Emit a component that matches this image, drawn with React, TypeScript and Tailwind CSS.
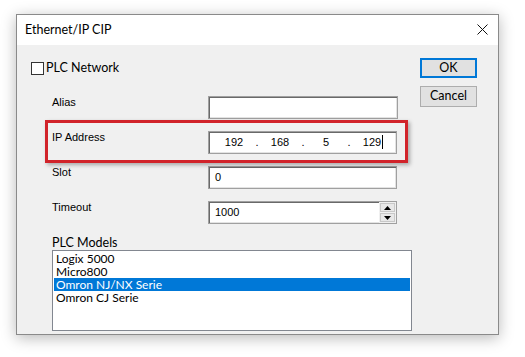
const labelFont = "font-['Liberation_Sans',Arial,sans-serif] text-[11px]"
const uiFont = "font-['Lato','Noto_Sans',sans-serif]"

const sunken =
  'border border-[#a0a0a0] bg-white shadow-[inset_1px_1px_0_#696969,inset_-1px_-1px_0_#e3e3e3]'

const models = ['Logix 5000', 'Micro800', 'Omron NJ/NX Serie', 'Omron CJ Serie']

const FieldRow = ({ label, children }: { label: string; children: React.ReactNode }) => (
  <div className="flex h-[23px]">
    <div className={`w-[177px] pl-[21px] leading-[13px] text-black ${labelFont}`}>{label}</div>
    {children}
  </div>
)

const IpField = () => {
  const parts = ['192', '168', '5', '129']
  return (
    <div className={`flex h-[23px] w-[189px] items-center pl-[5px] ${sunken} ${labelFont}`}>
      {parts.map((p, i) => (
        <div key={i} className="flex items-center">
          <span className="w-[40px] text-center">
            <span className="relative">
              {p}
              {i === 3 && (
                <span className="absolute right-[-2px] top-[-1px] h-[14px] w-px bg-black" />
              )}
            </span>
          </span>
          {i < 3 && <span className="w-[6px] text-center">.</span>}
        </div>
      ))}
    </div>
  )
}

export default function App() {
  return (
    <div className="h-[357px] w-[525px] overflow-hidden bg-white pl-[16px] pt-[14px]">
      <div className="flex h-[321px] w-[483px] flex-col border border-[#8a8a8a] bg-white shadow-[0_3px_14px_rgba(0,0,0,0.28)]">
        {/* title bar */}
        <div className="flex h-[30px] items-center justify-between pl-[8px] pr-[10px]">
          <span className={`text-[12.5px] text-black ${uiFont}`}>Ethernet/IP CIP</span>
          <svg width="11" height="11" viewBox="0 0 11 11" className="mt-[-1px]">
            <path d="M0.5 0.5 L10.5 10.5 M10.5 0.5 L0.5 10.5" stroke="#111" strokeWidth="1" />
          </svg>
        </div>

        {/* body */}
        <div className="relative flex flex-1 bg-[#f0f0f0] pt-[13px]">
          <div className="flex w-[402px] flex-col pl-[14px]">
            <div className="flex h-[20px] items-center">
              <span className="h-[13px] w-[13px] border border-[#333] bg-white" />
              <span className={`ml-[2px] text-[12.5px] leading-[14px] text-black ${uiFont}`}>PLC Network</span>
            </div>

            <div className="mt-[18px] flex flex-col gap-[12px]">
              <FieldRow label="Alias">
                <div className={`h-[23px] w-[190px] ${sunken}`} />
              </FieldRow>
              <FieldRow label="IP Address">
                <IpField />
              </FieldRow>
              <FieldRow label="Slot">
                <div className={`flex h-[23px] w-[189px] items-center pl-[6px] ${sunken} ${labelFont}`}>0</div>
              </FieldRow>
              <FieldRow label="Timeout">
                <div className={`flex h-[23px] w-[189px] items-center ${sunken} ${labelFont}`}>
                  <span className="flex-1 pl-[6px]">1000</span>
                  <div className="flex h-full w-[17px] flex-col gap-px bg-[#f0f0f0] p-px">
                    <div className="flex flex-1 items-center justify-center border border-[#c8c8c8] bg-[#e8e8e8]">
                      <svg width="7" height="4" viewBox="0 0 7 4">
                        <path d="M0 4 L3.5 0 L7 4 Z" fill="#000" />
                      </svg>
                    </div>
                    <div className="flex flex-1 items-center justify-center border border-[#c8c8c8] bg-[#e8e8e8]">
                      <svg width="7" height="4" viewBox="0 0 7 4">
                        <path d="M0 0 L7 0 L3.5 4 Z" fill="#000" />
                      </svg>
                    </div>
                  </div>
                </div>
              </FieldRow>
            </div>

            <div className={`mt-[11px] pl-[21px] text-[12.5px] leading-[15px] text-black ${uiFont}`}>PLC Models</div>
            <div className={`ml-[21px] h-[81px] w-[360px] border border-[#828790] bg-white px-px pt-[1px] text-[12px] leading-[13px] text-black ${uiFont}`}>
              {models.map((m) => (
                <div
                  key={m}
                  className={`h-[13px] pl-[2px] ${m === 'Omron NJ/NX Serie' ? 'bg-[#0078d7] text-white' : ''}`}
                >
                  {m}
                </div>
              ))}
            </div>
          </div>

          <div className="flex flex-col gap-[8px] pl-[1px]">
            <button className={`h-[20px] w-[57px] border-2 border-[#0078d7] bg-[#e1e1e1] text-[12.5px] leading-none text-black ${uiFont}`}>
              OK
            </button>
            <button className={`h-[21px] w-[57px] border border-[#adadad] bg-[#e1e1e1] text-[12.5px] leading-none text-black ${uiFont}`}>
              Cancel
            </button>
          </div>

          {/* red annotation around the IP address row */}
          <div className="pointer-events-none absolute left-[28px] top-[75px] h-[43px] w-[363px] border-[3px] border-[#d1232a] shadow-[2px_2px_4px_rgba(0,0,0,0.3)]" />
        </div>
      </div>
    </div>
  )
}
